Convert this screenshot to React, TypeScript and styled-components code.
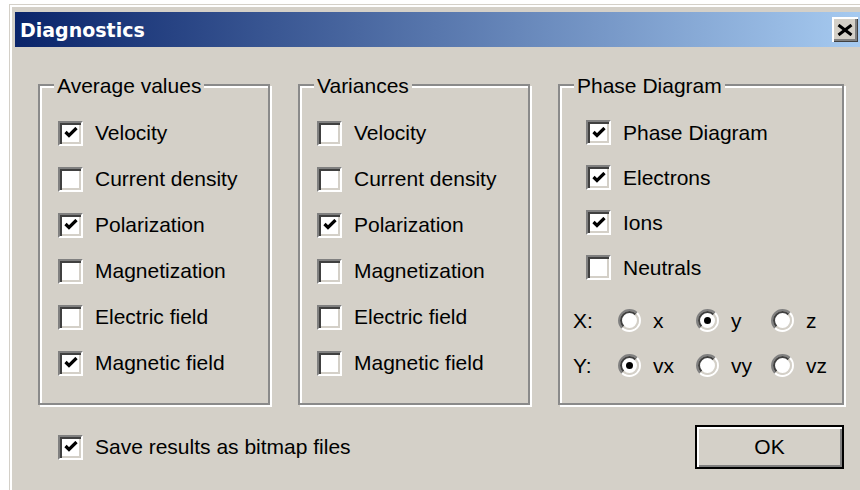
import React, { useState } from "react";
import styled, { createGlobalStyle } from "styled-components";

const GlobalStyle = createGlobalStyle`
  html, body {
    margin: 0;
    padding: 0;
    background: #ffffff;
    width: 860px;
    height: 490px;
    overflow: hidden;
  }
  body {
    font-family: "Liberation Sans", Arial, sans-serif;
    -webkit-font-smoothing: antialiased;
  }
`;

const Page = styled.div`
  box-sizing: border-box;
  width: 860px;
  height: 490px;
  padding: 4px 0 0 9px;
  overflow: hidden;
`;

const Window = styled.div`
  box-sizing: border-box;
  width: 880px;
  height: 520px;
  padding: 7px 0 0 5px;
  background: #d4d0c8;
  border: 1px solid #d4d0c8;
  box-shadow: inset 2px 2px 0 #ffffff;
`;

const TitleBar = styled.div`
  box-sizing: border-box;
  width: 845px;
  height: 35px;
  padding: 0 2px 0 5px;
  display: flex;
  align-items: center;
  justify-content: space-between;
  background: linear-gradient(to right, #0a246a 0%, #a6caf0 100%);
`;

const Title = styled.span`
  font-family: "DejaVu Sans", Verdana, sans-serif;
  font-weight: bold;
  font-size: 19px;
  color: #ffffff;
`;

const CloseButton = styled.button`
  box-sizing: border-box;
  width: 26px;
  height: 25px;
  padding: 0;
  border: none;
  display: flex;
  align-items: center;
  justify-content: center;
  background: #d4d0c8;
  box-shadow: inset 2px 2px 0 #ffffff, inset -1px -1px 0 #404040,
    inset -3px -3px 0 #808080;
`;

const Client = styled.div`
  width: 806px;
  padding: 27px 0 0 23px;
`;

const GroupRow = styled.div`
  display: flex;
  gap: 28px;
`;

const Group = styled.fieldset<{ $width: number }>`
  box-sizing: border-box;
  width: ${(p) => p.$width}px;
  min-width: 0;
  margin: 0;
  padding: 15px 0;
  border: 2px solid #8a8a8a;
  box-shadow: inset 2px 2px 0 #ffffff, 2px 2px 0 #ffffff;
`;

const Legend = styled.legend`
  margin-left: 14px;
  padding: 3px 3px 0;
  background: #d4d0c8;
  font-size: 21px;
  line-height: 18px;
  color: #000000;
`;

const GroupBody = styled.div<{ $inset: number }>`
  padding-left: ${(p) => p.$inset}px;
`;

const Row = styled.label<{ $height: number }>`
  display: flex;
  align-items: center;
  gap: 12px;
  height: ${(p) => p.$height}px;
  font-size: 21px;
  color: #000000;
  cursor: default;
  user-select: none;
`;

const Box = styled.span`
  box-sizing: border-box;
  flex: none;
  width: 25px;
  height: 25px;
  display: flex;
  align-items: center;
  justify-content: center;
  background: #ffffff;
  border: 2px solid;
  border-color: #808080 #ffffff #ffffff #808080;
  box-shadow: inset 2px 2px 0 #404040, inset -2px -2px 0 #d4d0c8;
`;

const RadioRow = styled.div`
  display: grid;
  grid-template-columns: 45px 78px 75px auto;
  align-items: center;
  height: 45px;
  margin-left: -13px;
  font-size: 21px;
  color: #000000;
`;

const Axis = styled.span`
  font-size: 21px;
`;

const RadioOption = styled.label`
  display: flex;
  align-items: center;
  gap: 12px;
  cursor: default;
  user-select: none;
`;

const RadioGap = styled.div`
  height: 8px;
`;

const BottomRow = styled.div`
  display: flex;
  align-items: center;
  justify-content: space-between;
  margin-top: 19px;
  padding-left: 20px;
`;

const OkButton = styled.button`
  box-sizing: border-box;
  width: 149px;
  height: 44px;
  padding: 0;
  background: #d4d0c8;
  border: 2px solid #000000;
  box-shadow: inset 2px 2px 0 #ffffff, inset -2px -2px 0 #808080;
  font-family: "Liberation Sans", Arial, sans-serif;
  font-size: 21px;
  color: #000000;
`;

function CheckMark() {
  return (
    <svg width="14" height="12" viewBox="0 0 14 12">
      <path
        d="M1.5 5 L5 8.5 L12.5 1"
        fill="none"
        stroke="#000"
        strokeWidth="3.2"
        strokeLinecap="butt"
        strokeLinejoin="miter"
      />
    </svg>
  );
}

function Checkbox({
  label,
  checked,
  onToggle,
  height = 46,
}: {
  label: string;
  checked: boolean;
  onToggle: () => void;
  height?: number;
}) {
  return (
    <Row $height={height} onClick={onToggle}>
      <Box>{checked && <CheckMark />}</Box>
      {label}
    </Row>
  );
}

// Classic sunken radio circle: grey/black arcs on the upper left, white/silver on the lower right
function RadioDot({ checked }: { checked: boolean }) {
  const c = 11.5;
  const arc = (r: number, upper: boolean) => {
    const d = 0.7071 * r;
    const a = upper ? [c - d, c + d, c + d, c - d] : [c + d, c - d, c - d, c + d];
    return `M${a[0]} ${a[1]} A${r} ${r} 0 0 1 ${a[2]} ${a[3]}`;
  };
  return (
    <svg width="23" height="23" viewBox="0 0 23 23">
      <circle cx={c} cy={c} r={8} fill="#fff" />
      <path d={arc(10.5, true)} fill="none" stroke="#808080" strokeWidth="2" />
      <path d={arc(10.5, false)} fill="none" stroke="#ffffff" strokeWidth="2" />
      <path d={arc(8.5, true)} fill="none" stroke="#404040" strokeWidth="2" />
      <path d={arc(8.5, false)} fill="none" stroke="#d4d0c8" strokeWidth="2" />
      {checked && <circle cx={c} cy={c} r={3.5} fill="#000" />}
    </svg>
  );
}

function Radio({
  label,
  checked,
  onPick,
}: {
  label: string;
  checked: boolean;
  onPick: () => void;
}) {
  return (
    <RadioOption onClick={onPick}>
      <RadioDot checked={checked} />
      {label}
    </RadioOption>
  );
}

const quantities = [
  "Velocity",
  "Current density",
  "Polarization",
  "Magnetization",
  "Electric field",
  "Magnetic field",
];

const species = ["Phase Diagram", "Electrons", "Ions", "Neutrals"];

export default function App() {
  const [avg, setAvg] = useState([true, false, true, false, false, true]);
  const [vars, setVars] = useState([false, false, true, false, false, false]);
  const [phase, setPhase] = useState([true, true, true, false]);
  const [xAxis, setXAxis] = useState("y");
  const [yAxis, setYAxis] = useState("vx");
  const [saveBitmaps, setSaveBitmaps] = useState(true);

  const flip = (list: boolean[], set: (v: boolean[]) => void, i: number) =>
    set(list.map((v, j) => (j === i ? !v : v)));

  return (
    <>
      <GlobalStyle />
      <Page>
        <Window>
          <TitleBar>
            <Title>Diagnostics</Title>
            <CloseButton aria-label="Close">
              <svg width="16" height="12" viewBox="0 0 16 12">
                <path
                  d="M1.5 1 L14.5 11 M14.5 1 L1.5 11"
                  stroke="#000"
                  strokeWidth="3"
                />
              </svg>
            </CloseButton>
          </TitleBar>
          <Client>
            <GroupRow>
              <Group $width={232}>
                <Legend>Average values</Legend>
                <GroupBody $inset={18}>
                  {quantities.map((q, i) => (
                    <Checkbox
                      key={q}
                      label={q}
                      checked={avg[i]}
                      onToggle={() => flip(avg, setAvg, i)}
                    />
                  ))}
                </GroupBody>
              </Group>
              <Group $width={232}>
                <Legend>Variances</Legend>
                <GroupBody $inset={17}>
                  {quantities.map((q, i) => (
                    <Checkbox
                      key={q}
                      label={q}
                      checked={vars[i]}
                      onToggle={() => flip(vars, setVars, i)}
                    />
                  ))}
                </GroupBody>
              </Group>
              <Group $width={286}>
                <Legend>Phase Diagram</Legend>
                <GroupBody $inset={26}>
                  {species.map((s, i) => (
                    <Checkbox
                      key={s}
                      label={s}
                      height={45}
                      checked={phase[i]}
                      onToggle={() => flip(phase, setPhase, i)}
                    />
                  ))}
                  <RadioGap />
                  <RadioRow>
                    <Axis>X:</Axis>
                    {["x", "y", "z"].map((a) => (
                      <Radio
                        key={a}
                        label={a}
                        checked={xAxis === a}
                        onPick={() => setXAxis(a)}
                      />
                    ))}
                  </RadioRow>
                  <RadioRow>
                    <Axis>Y:</Axis>
                    {["vx", "vy", "vz"].map((a) => (
                      <Radio
                        key={a}
                        label={a}
                        checked={yAxis === a}
                        onPick={() => setYAxis(a)}
                      />
                    ))}
                  </RadioRow>
                </GroupBody>
              </Group>
            </GroupRow>
            <BottomRow>
              <Checkbox
                label="Save results as bitmap files"
                checked={saveBitmaps}
                onToggle={() => setSaveBitmaps(!saveBitmaps)}
              />
              <OkButton>OK</OkButton>
            </BottomRow>
          </Client>
        </Window>
      </Page>
    </>
  );
}
